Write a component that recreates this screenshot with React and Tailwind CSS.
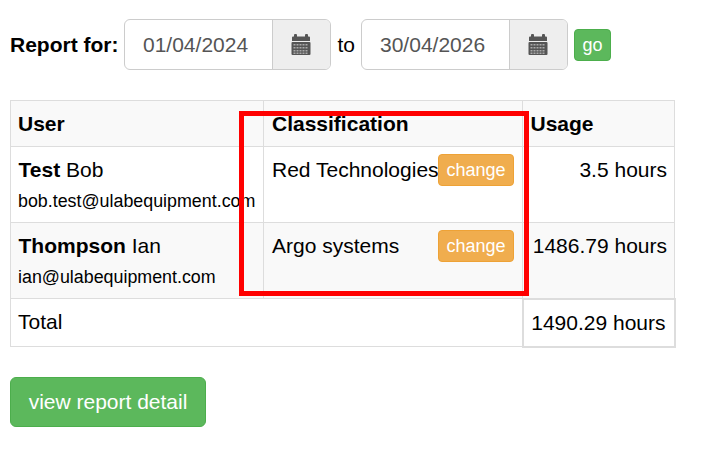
import React from 'react';

const CalendarIcon = () => (
  <svg width="20" height="21" viewBox="0 0 20 21" className="block">
    <rect x="3" y="0" width="3" height="4" rx="1" fill="#555" />
    <rect x="14" y="0" width="3" height="4" rx="1" fill="#555" />
    <path d="M1 3.5a1 1 0 0 1 1-1h16a1 1 0 0 1 1 1V7H1z" fill="#555" />
    <rect x="0.5" y="8" width="19" height="13" rx="1" fill="#555" />
    {[10, 13, 16, 18.5].map((y) =>
      [2.5, 5.5, 8.5, 11.5, 14.5].map((x) => (
        <rect key={`${x}-${y}`} x={x} y={y} width="2" height="1.5" fill="#aaa" />
      ))
    )}
  </svg>
);

const DateInput = ({ value }) => (
  <div className="flex h-[51px] w-[207px] rounded-[6px] border border-[#ccc] bg-white">
    <div className="flex-1 pl-[18px] text-[21px] leading-[49px] text-[#555]">{value}</div>
    <div className="flex w-[58px] items-center justify-center rounded-r-[5px] border-l border-[#ccc] bg-[#eee] pr-[2px]">
      <CalendarIcon />
    </div>
  </div>
);

const ChangeButton = () => (
  <button className="-mt-px h-[32px] w-[76px] shrink-0 rounded-[4px] border border-[#eea236] bg-[#f0ad4e] text-[18px] leading-[28px] text-white">
    change
  </button>
);

const Classification = ({ name }) => (
  <div className="flex items-start">
    <span className="w-0 flex-1 whitespace-nowrap">{name}</span>
    <ChangeButton />
  </div>
);

export default function App() {
  return (
    <div className="relative h-[454px] w-[727px] bg-white px-[10px] pt-[19px] font-['Liberation_Sans',Arial,sans-serif] text-[21px] leading-[30px] text-black">
      <div className="flex items-center">
        <b className="mr-[5.5px]">Report for:</b>
        <DateInput value="01/04/2024" />
        <span className="ml-[6.5px] mr-[6px]">to</span>
        <DateInput value="30/04/2026" />
        <button className="ml-[6px] h-[32px] w-[37px] rounded-[4px] border border-[#4cae4c] bg-[#5cb85c] text-[18px] leading-[28px] text-white">
          go
        </button>
      </div>

      <table className="mt-[30px] w-[664px] table-fixed border-collapse">
        <colgroup>
          <col className="w-[253px]" />
          <col className="w-[259px]" />
          <col className="w-[152px]" />
        </colgroup>
        <tbody>
          <tr className="bg-[#f9f9f9]">
            <th className="border border-[#ddd] pb-[7px] pl-[7px] pr-2 pt-2 text-left">User</th>
            <th className="border border-[#ddd] pb-[7px] pl-2 pr-2 pt-2 text-left">Classification</th>
            <th className="border border-[#ddd] pb-[7px] pl-[7.5px] pr-2 pt-2 text-left">Usage</th>
          </tr>
          <tr>
            <td className="border border-[#ddd] pb-[6px] pl-[7px] pr-0 pt-2 align-top">
              <div className="pl-[0.5px]"><b>Test</b> Bob</div>
              <div className="mt-[2px] whitespace-nowrap text-[17.85px] leading-[29px]">bob.test@ulabequipment.com</div>
            </td>
            <td className="border border-[#ddd] pb-2 pl-2 pr-2 pt-2 align-top"><Classification name="Red Technologies" /></td>
            <td className="whitespace-nowrap border border-[#ddd] pb-2 pl-0 pr-[7px] pt-2 text-right align-top">3.5 hours</td>
          </tr>
          <tr className="bg-[#f9f9f9]">
            <td className="border border-[#ddd] pb-[6px] pl-[7px] pr-0 pt-2 align-top">
              <div className="pl-[0.5px]"><b>Thompson</b> Ian</div>
              <div className="mt-[2px] whitespace-nowrap text-[17.85px] leading-[29px]">ian@ulabequipment.com</div>
            </td>
            <td className="border border-[#ddd] pb-2 pl-2 pr-2 pt-2 align-top"><Classification name="Argo systems" /></td>
            <td className="whitespace-nowrap border border-[#ddd] pb-2 pl-0 pr-[7px] pt-2 text-right align-top">1486.79 hours</td>
          </tr>
          <tr>
            <td colSpan={2} className="border border-[#ddd] pb-2 pl-[7px] pt-2 align-top">Total</td>
            <td className="whitespace-nowrap border-2 border-[#ddd] pb-2 pl-0 pr-2 pt-2 text-right">1490.29 hours</td>
          </tr>
        </tbody>
      </table>

      <button className="mt-[29px] h-[50px] w-[196px] rounded-[6px] border border-[#4cae4c] bg-[#5cb85c] text-[21px] text-white">
        view report detail
      </button>

      {/* annotation drawn over the screenshot */}
      <div className="pointer-events-none absolute left-[239px] top-[111px] h-[185px] w-[290px] border-[5px] border-[#f00]" />
    </div>
  );
}
